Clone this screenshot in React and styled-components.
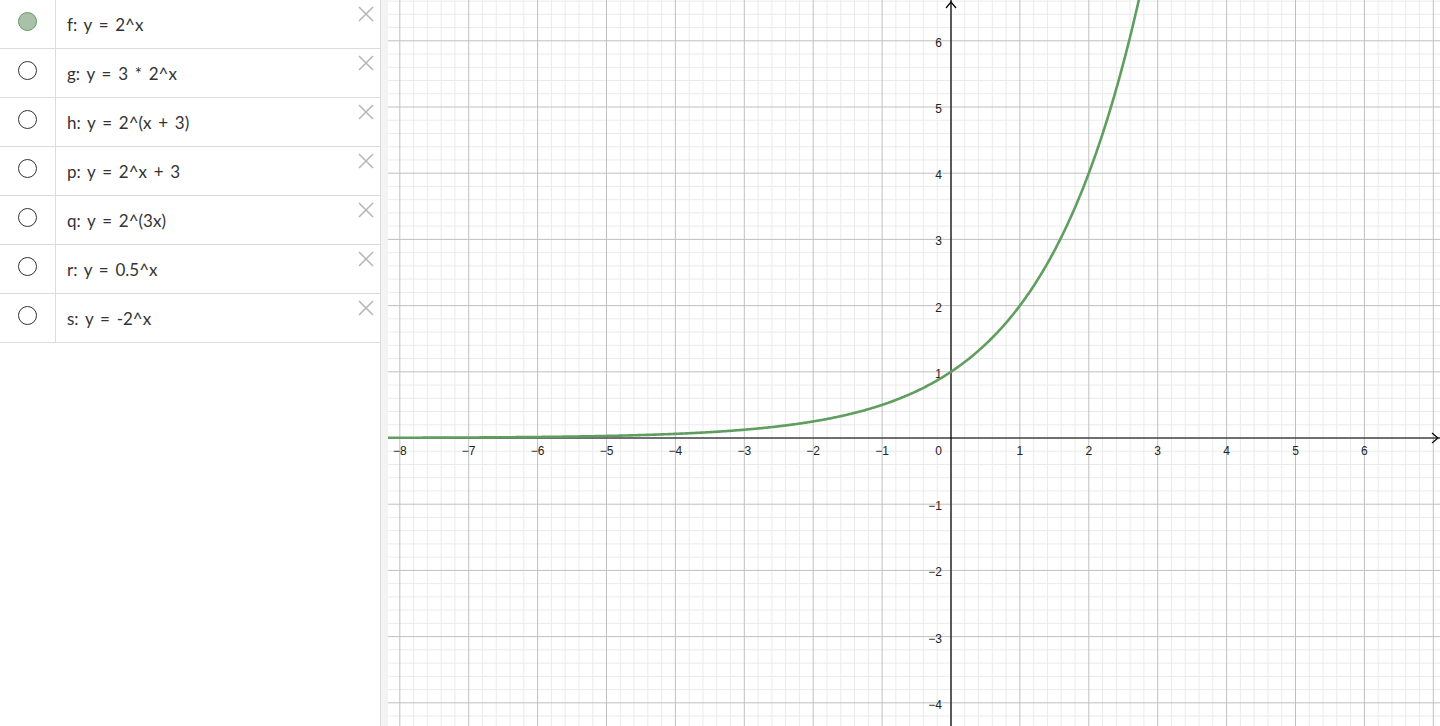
import React from "react";
import styled, { createGlobalStyle } from "styled-components";

const GlobalStyle = createGlobalStyle`
  html, body {
    margin: 0;
    padding: 0;
    background: #ffffff;
    overflow: hidden;
  }
  body {
    font-family: "Lato", "Noto Sans", sans-serif;
  }
`;

const CURVE = "#5f9e5f";

const Page = styled.div`
  display: flex;
  width: 1440px;
  height: 726px;
  overflow: hidden;
`;

const AlgebraPanel = styled.div`
  width: 380px;
  flex-shrink: 0;
  display: flex;
  flex-direction: column;
  background: #fff;
`;

const Row = styled.div`
  display: flex;
  height: 48px;
  border-bottom: 1px solid #dcdcdc;
  position: relative;
`;

const MarkerCell = styled.div`
  width: 56px;
  flex-shrink: 0;
  border-right: 1px solid #dcdcdc;
  display: flex;
  justify-content: center;
  padding-top: 12px;
  box-sizing: border-box;
`;

const Marker = styled.div`
  width: 19px;
  height: 19px;
  border-radius: 50%;
  box-sizing: border-box;
  border: 1px solid ${(p) => (p.$on ? CURVE : "#333")};
  background: ${(p) => (p.$on ? "#a9c1a9" : "#fff")};
`;

const Formula = styled.div`
  flex: 1;
  padding: 14px 0 0 11px;
  font-size: 17px;
  color: #333;
  white-space: pre;
  word-spacing: 2.4px;
`;

const DeleteButton = styled.button`
  position: absolute;
  top: 6px;
  right: 6px;
  width: 16px;
  height: 16px;
  padding: 0;
  border: none;
  background: transparent;
  display: flex;
`;

const Splitter = styled.div`
  width: 7px;
  flex-shrink: 0;
  background: #f3f3f3;
  border-left: 1px solid #dcdcdc;
`;

const GraphView = styled.div`
  flex: 1;
  position: relative;
  background: #fff;
`;

const rows = [
  { name: "f", expr: "y = 2^x", on: true },
  { name: "g", expr: "y = 3 * 2^x" },
  { name: "h", expr: "y = 2^(x + 3)" },
  { name: "p", expr: "y = 2^x + 3" },
  { name: "q", expr: "y = 2^(3x)" },
  { name: "r", expr: "y = 0.5^x" },
  { name: "s", expr: "y = -2^x" },
];

const CloseIcon = () => (
  <svg width="16" height="16" viewBox="0 0 16 16">
    <path d="M1 1 L15 15 M15 1 L1 15" stroke="#b5b5b5" strokeWidth="1.5" fill="none" />
  </svg>
);

const W = 1052;
const H = 726;
const OX = 563;
const OY = 438;
const UX = 68.9;
const UY = 66.2;

const minus = (n) => (n < 0 ? `\u2212${Math.abs(n)}` : `${n}`);

const Graph = () => {
  const minor = [];
  const major = [];
  for (let i = Math.ceil((-OX / UX) * 5); i <= Math.floor(((W - OX) / UX) * 5); i++) {
    const x = OX + (i * UX) / 5;
    (i % 5 === 0 ? major : minor).push(
      <line key={`x${i}`} x1={x} y1={0} x2={x} y2={H} />
    );
  }
  for (let j = Math.ceil((-(H - OY) / UY) * 5); j <= Math.floor((OY / UY) * 5); j++) {
    const y = OY - (j * UY) / 5;
    (j % 5 === 0 ? major : minor).push(
      <line key={`y${j}`} x1={0} y1={y} x2={W} y2={y} />
    );
  }

  const pts = [];
  for (let px = 0; px <= 760; px += 1) {
    const x = (px - OX) / UX;
    const y = Math.pow(2, x);
    const py = OY - y * UY;
    pts.push(`${px},${py.toFixed(2)}`);
    if (py < -5) break;
  }

  const xLabels = [];
  for (let n = -8; n <= 6; n++) {
    if (n === 0) continue;
    xLabels.push(
      <text key={n} x={OX + n * UX} y={OY + 17} textAnchor="middle">
        {minus(n)}
      </text>
    );
  }
  const yLabels = [];
  for (let n = -4; n <= 6; n++) {
    if (n === 0) continue;
    yLabels.push(
      <text key={n} x={OX - 9} y={OY - n * UY + 6} textAnchor="end">
        {minus(n)}
      </text>
    );
  }

  return (
    <svg width={W} height={H} style={{ display: "block" }}>
      <g stroke="#ebebeb" strokeWidth="1">{minor}</g>
      <g stroke="#c0c0c0" strokeWidth="1">{major}</g>
      <g stroke="#000" strokeWidth="1.2" fill="none">
        <line x1={0} y1={OY} x2={W} y2={OY} />
        <line x1={OX} y1={0} x2={OX} y2={H} />
        <path d={`M${W - 8} ${OY - 5} L${W - 2} ${OY} L${W - 8} ${OY + 5}`} />
        <path d={`M${OX - 5} 8 L${OX} 2 L${OX + 5} 8`} />
      </g>
      <g fontFamily="'Liberation Sans', Arial, sans-serif" fontSize="12" fill="#222">
        {xLabels}
        {yLabels}
        <text x={OX - 9} y={OY + 17} textAnchor="end">0</text>
      </g>
      <polyline
        points={pts.join(" ")}
        fill="none"
        stroke={CURVE}
        strokeWidth="2.6"
        strokeLinejoin="round"
      />
    </svg>
  );
};

export default function App() {
  return (
    <>
      <GlobalStyle />
      <Page>
        <AlgebraPanel>
          {rows.map((r) => (
            <Row key={r.name}>
              <MarkerCell>
                <Marker $on={r.on} />
              </MarkerCell>
              <Formula>{`${r.name}: ${r.expr}`}</Formula>
              <DeleteButton aria-label="Delete">
                <CloseIcon />
              </DeleteButton>
            </Row>
          ))}
        </AlgebraPanel>
        <Splitter />
        <GraphView>
          <Graph />
        </GraphView>
      </Page>
    </>
  );
}
